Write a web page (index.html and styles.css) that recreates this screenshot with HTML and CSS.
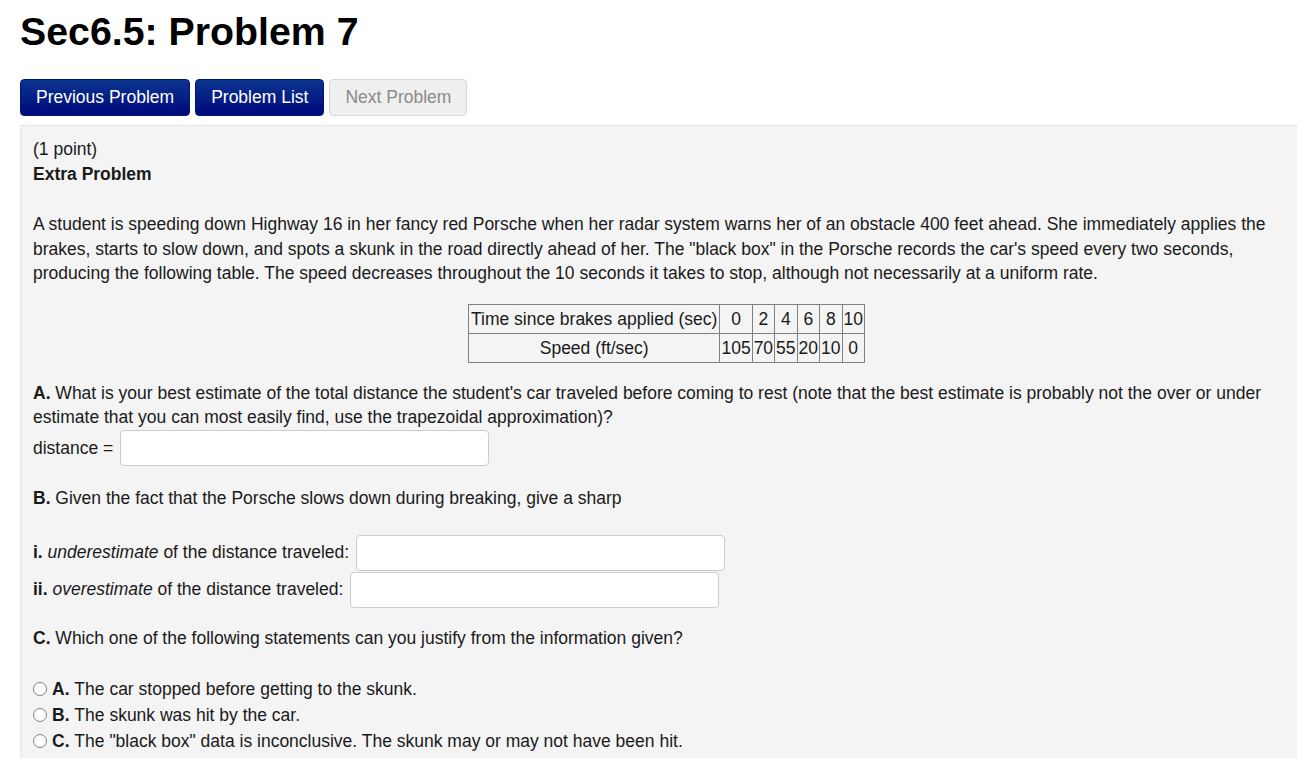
FILE: index.html
```html
<!DOCTYPE html>
<html>
<head>
<meta charset="utf-8">
<link rel="stylesheet" href="styles.css">
</head>
<body>
<h1 class="title">Sec6.5: Problem 7</h1>
<div class="nav">
  <a class="btn btn-primary">Previous Problem</a>
  <a class="btn btn-primary">Problem List</a>
  <a class="btn btn-disabled">Next Problem</a>
</div>
<div class="problem">
  <div class="line">(1 point)</div>
  <div class="line"><b>Extra Problem</b></div>
  <p class="para">A student is speeding down Highway 16 in her fancy red Porsche when her radar system warns her of an obstacle 400 feet ahead. She immediately applies the brakes, starts to slow down, and spots a skunk in the road directly ahead of her. The "black box" in the Porsche records the car's speed every two seconds, producing the following table. The speed decreases throughout the 10 seconds it takes to stop, although not necessarily at a uniform rate.</p>
  <div class="table-wrap">
    <table class="data">
      <tr><td class="head">Time since brakes applied (sec)</td><td>0</td><td>2</td><td>4</td><td>6</td><td>8</td><td>10</td></tr>
      <tr><td class="head">Speed (ft/sec)</td><td>105</td><td>70</td><td>55</td><td>20</td><td>10</td><td>0</td></tr>
    </table>
  </div>
  <p class="para qa"><b class="lbl">A.</b> What is your best estimate of the total distance the student's car traveled before coming to rest (note that the best estimate is probably not the over or under estimate that you can most easily find, use the trapezoidal approximation)?</p>
  <div class="ans-row a0">distance = <input class="ans" type="text"></div>
  <p class="para qb"><b class="lbl">B.</b> Given the fact that the Porsche slows down during breaking, give a sharp</p>
  <div class="ans-row r1"><b>i.</b>&nbsp;<i>underestimate</i>&nbsp;of the distance traveled: <input class="ans" type="text"></div>
  <div class="ans-row r2"><b>ii.</b>&nbsp;<i>overestimate</i>&nbsp;of the distance traveled: <input class="ans" type="text"></div>
  <p class="para qc"><b class="lbl">C.</b> Which one of the following statements can you justify from the information given?</p>
  <div class="options">
    <label class="opt"><span class="radio"></span><b>A.</b>&nbsp;The car stopped before getting to the skunk.</label>
    <label class="opt"><span class="radio"></span><b>B.</b>&nbsp;The skunk was hit by the car.</label>
    <label class="opt"><span class="radio"></span><b>C.</b>&nbsp;The "black box" data is inconclusive. The skunk may or may not have been hit.</label>
  </div>
</div>
</body>
</html>
```
FILE: styles.css
```css
html, body { overflow: hidden; }
body {
  margin: 0;
  padding: 0 0 0 20px;
  font-family: "Liberation Sans", Arial, sans-serif;
  font-size: 17.5px;
  color: #1a1a1a;
  background: #fff;
}
.title {
  margin: 0;
  padding-top: 9px;
  font-size: 39.3px;
  line-height: 44px;
  font-weight: bold;
  color: #000;
}
.nav {
  display: flex;
  gap: 5px;
  margin-top: 26px;
}
.btn {
  display: block;
  box-sizing: border-box;
  height: 37px;
  line-height: 35px;
  padding: 0 15px;
  border-radius: 4px;
  font-size: 17.5px;
  border: 1px solid;
}
.btn-primary {
  color: #fff;
  background: linear-gradient(to bottom, #0b358f, #00087c);
  border-color: #001a6a;
}
.btn-disabled {
  color: #8a8a8a;
  background: #efefef;
  border-color: #d8d8d8;
}
.problem {
  margin-top: 9px;
  width: 1290px;
  box-sizing: border-box;
  background: #f4f4f4;
  border: 1px solid #e6e6e6;
  border-right: none;
  padding: 11px 12px 20px 12px;
  line-height: 24.5px;
}
.line { line-height: 24.5px; }
.para {
  margin: 26px 0 0 0;
  line-height: 24.6px;
}
.lbl { display: inline-block; }
.table-wrap {
  display: flex;
  justify-content: center;
  margin-top: 18px;
  padding-left: 2px;
}
.data {
  border-collapse: collapse;
  border: 1px solid #808080;
}
.data td {
  border: 1px solid #808080;
  text-align: center;
  padding: 0 1px;
  height: 28px;
  line-height: 22px;
}
.data td.head { padding: 0 2px; }
.qa { margin-top: 18px; }
.ans-row {
  display: flex;
  align-items: center;
  margin-top: 2px;
  height: 36px;
}
.a0 { margin-top: 0; }
.ans {
  box-sizing: border-box;
  width: 369px;
  height: 36px;
  margin-left: 7px;
  border: 1px solid #cccccc;
  border-radius: 4px;
  background: #fff;
  font-size: 16px;
}
.qb { margin-top: 20px; }
.r1 { margin-top: 24px; }
.r2 { margin-top: 1px; }
.qc { margin-top: 18px; }
.options {
  margin-top: 26px;
  display: flex;
  flex-direction: column;
}
.opt {
  display: flex;
  align-items: center;
  height: 26px;
}
.radio {
  display: inline-block;
  width: 14px;
  height: 14px;
  box-sizing: border-box;
  border: 1px solid #808080;
  border-radius: 50%;
  background: #fff;
  margin: 0 5px 0 0;
}
```
